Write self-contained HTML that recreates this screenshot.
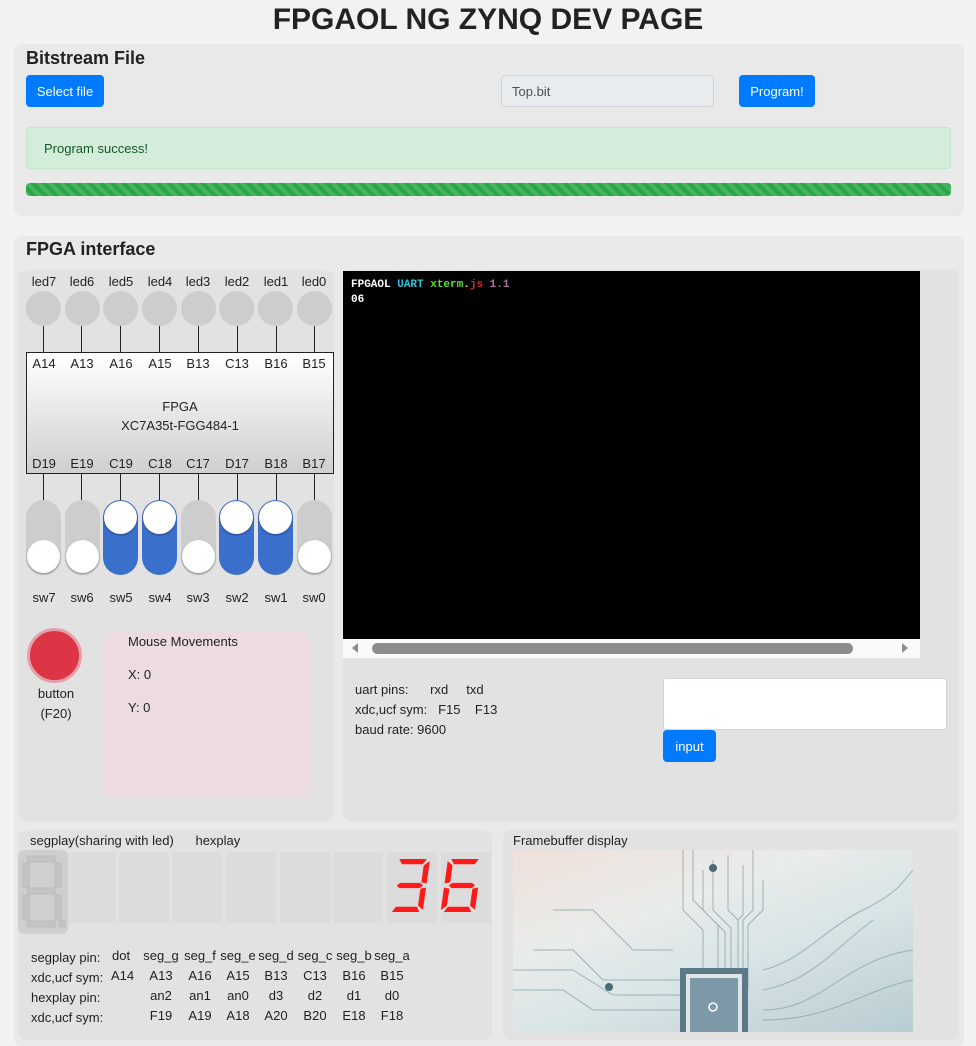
<!DOCTYPE html>
<html><head><meta charset="utf-8"><style>
*{box-sizing:border-box;margin:0;padding:0}
body{width:976px;height:1032px;overflow:hidden;background:#f2f2f2;font-family:"Liberation Sans",sans-serif;color:#222;font-size:13px;position:relative}
.a{position:absolute}
.card{position:absolute;background:#e9e9e9;border-radius:8px}
.btn{position:absolute;background:#007bff;color:#fff;border-radius:4px;font-size:13px;display:flex;align-items:center;justify-content:center}
.c{text-align:center;width:40px;margin-left:-20px}
.led{position:absolute;width:35px;height:35px;border-radius:50%;background:#cdcdcd;top:291px}
.vl{position:absolute;width:1px;background:#222}
.sw{position:absolute;width:35px;height:75px;border-radius:18px;top:500px;background:#cdcdcd}
.sw.on{background:#3a6fcc}
.k{position:absolute;left:1px;width:33px;height:33px;border-radius:50%;background:#fff;box-shadow:0 1px 2px rgba(0,0,0,.35)}
.sb{position:absolute;top:852px;height:71px;width:50px;background:#dcdcdc}
</style></head><body>
<div class="a" style="left:0;width:976px;top:3px;text-align:center;font-size:30px;font-weight:bold;color:#222">FPGAOL NG ZYNQ DEV PAGE</div>

<div class="card" style="left:14px;top:44px;width:950px;height:172px"></div>
<div class="a" style="left:26px;top:48px;font-size:18px;font-weight:bold">Bitstream File</div>
<div class="btn" style="left:26px;top:75px;width:78px;height:32px">Select file</div>
<div class="a" style="left:501px;top:75px;width:213px;height:32px;background:#e9ecef;border:1px solid #ced4da;border-radius:4px;padding:8px 10px;color:#495057">Top.bit</div>
<div class="btn" style="left:739px;top:75px;width:76px;height:32px">Program!</div>
<div class="a" style="left:26px;top:127px;width:925px;height:42px;background:#d4edda;border:1px solid #c3e6cb;border-radius:4px;padding:13px 17px;color:#155724">Program success!</div>
<div class="a" style="left:26px;top:183px;width:925px;height:13px;border-radius:4px;background:#28a745 repeating-linear-gradient(45deg,rgba(255,255,255,.15) 0 4px,transparent 4px 8px)"></div>

<div class="card" style="left:14px;top:236px;width:950px;height:810px"></div>
<div class="a" style="left:26px;top:239px;font-size:18px;font-weight:bold">FPGA interface</div>

<div class="a" style="left:18px;top:270px;width:316px;height:551px;background:#e2e2e2;border-radius:8px"></div>
<div class="a" style="left:343px;top:270px;width:616px;height:551px;background:#e2e2e2;border-radius:8px"></div>

<div class="a c" style="left:44px;top:274px">led7</div><div class="a c" style="left:82px;top:274px">led6</div><div class="a c" style="left:121px;top:274px">led5</div><div class="a c" style="left:160px;top:274px">led4</div><div class="a c" style="left:198px;top:274px">led3</div><div class="a c" style="left:237px;top:274px">led2</div><div class="a c" style="left:276px;top:274px">led1</div><div class="a c" style="left:314px;top:274px">led0</div>
<div class="led" style="left:26px"></div><div class="led" style="left:65px"></div><div class="led" style="left:103px"></div><div class="led" style="left:142px"></div><div class="led" style="left:181px"></div><div class="led" style="left:219px"></div><div class="led" style="left:258px"></div><div class="led" style="left:297px"></div>
<div class="vl" style="left:43px;top:326px;height:26px"></div><div class="vl" style="left:81px;top:326px;height:26px"></div><div class="vl" style="left:120px;top:326px;height:26px"></div><div class="vl" style="left:159px;top:326px;height:26px"></div><div class="vl" style="left:198px;top:326px;height:26px"></div><div class="vl" style="left:237px;top:326px;height:26px"></div><div class="vl" style="left:276px;top:326px;height:26px"></div><div class="vl" style="left:314px;top:326px;height:26px"></div>
<div class="a" style="left:26px;top:352px;width:308px;height:122px;border:1px solid #222;background:linear-gradient(#fff,#cfcfcf)"></div>
<div class="a c" style="left:44px;top:356px">A14</div><div class="a c" style="left:82px;top:356px">A13</div><div class="a c" style="left:121px;top:356px">A16</div><div class="a c" style="left:160px;top:356px">A15</div><div class="a c" style="left:198px;top:356px">B13</div><div class="a c" style="left:237px;top:356px">C13</div><div class="a c" style="left:276px;top:356px">B16</div><div class="a c" style="left:314px;top:356px">B15</div>
<div class="a" style="left:26px;width:308px;top:397px;text-align:center;line-height:19px">FPGA<br>XC7A35t-FGG484-1</div>
<div class="a c" style="left:44px;top:456px">D19</div><div class="a c" style="left:82px;top:456px">E19</div><div class="a c" style="left:121px;top:456px">C19</div><div class="a c" style="left:160px;top:456px">C18</div><div class="a c" style="left:198px;top:456px">C17</div><div class="a c" style="left:237px;top:456px">D17</div><div class="a c" style="left:276px;top:456px">B18</div><div class="a c" style="left:314px;top:456px">B17</div>
<div class="vl" style="left:43px;top:474px;height:26px"></div><div class="vl" style="left:81px;top:474px;height:26px"></div><div class="vl" style="left:120px;top:474px;height:26px"></div><div class="vl" style="left:159px;top:474px;height:26px"></div><div class="vl" style="left:198px;top:474px;height:26px"></div><div class="vl" style="left:237px;top:474px;height:26px"></div><div class="vl" style="left:276px;top:474px;height:26px"></div><div class="vl" style="left:314px;top:474px;height:26px"></div>
<div class="sw" style="left:26px"><div class="k" style="top:40px"></div></div>
<div class="sw" style="left:65px"><div class="k" style="top:40px"></div></div>
<div class="sw on" style="left:103px"><div class="k" style="top:1px"></div></div>
<div class="sw on" style="left:142px"><div class="k" style="top:1px"></div></div>
<div class="sw" style="left:181px"><div class="k" style="top:40px"></div></div>
<div class="sw on" style="left:219px"><div class="k" style="top:1px"></div></div>
<div class="sw on" style="left:258px"><div class="k" style="top:1px"></div></div>
<div class="sw" style="left:297px"><div class="k" style="top:40px"></div></div>
<div class="a c" style="left:44px;top:590px">sw7</div><div class="a c" style="left:82px;top:590px">sw6</div><div class="a c" style="left:121px;top:590px">sw5</div><div class="a c" style="left:160px;top:590px">sw4</div><div class="a c" style="left:198px;top:590px">sw3</div><div class="a c" style="left:237px;top:590px">sw2</div><div class="a c" style="left:276px;top:590px">sw1</div><div class="a c" style="left:314px;top:590px">sw0</div>

<div class="a" style="left:27px;top:628px;width:55px;height:55px;border-radius:50%;background:#dc3545;border:3px solid #e8a0a8"></div>
<div class="a" style="left:26px;width:60px;top:684px;text-align:center;line-height:20px">button<br>(F20)</div>
<div class="a" style="left:103px;top:631px;width:206px;height:166px;background:#ecdce2;border-radius:8px"></div>
<div class="a" style="left:128px;top:634px">Mouse Movements</div>
<div class="a" style="left:128px;top:667px">X: 0</div>
<div class="a" style="left:128px;top:700px">Y: 0</div>

<div class="a" style="left:343px;top:271px;width:577px;height:368px;background:#000;font-family:'Liberation Mono',monospace;font-size:11px;font-weight:bold;padding:7px 8px;line-height:15px;color:#fff"><span>FPGAOL</span> <span style="color:#2fc4e0">UART</span> <span style="color:#5ce034">xterm</span><span style="color:#f0e020">.</span><span style="color:#e02020">js</span> <span style="color:#b070a0">1.1</span><br>06</div>
<div class="a" style="left:343px;top:639px;width:577px;height:19px;background:#fafafa"></div>
<div class="a" style="left:372px;top:643px;width:481px;height:11px;border-radius:6px;background:#8c8c8c"></div>
<div class="a" style="left:352px;top:643px;width:0;height:0;border-top:5px solid transparent;border-bottom:5px solid transparent;border-right:6px solid #8c8c8c"></div>
<div class="a" style="left:902px;top:643px;width:0;height:0;border-top:5px solid transparent;border-bottom:5px solid transparent;border-left:6px solid #8c8c8c"></div>
<div class="a" style="left:355px;top:680px;line-height:20px">uart pins:&nbsp;&nbsp;&nbsp;&nbsp;&nbsp;&nbsp;rxd&nbsp;&nbsp;&nbsp;&nbsp;&nbsp;txd<br>xdc,ucf sym:&nbsp;&nbsp;&nbsp;F15&nbsp;&nbsp;&nbsp;&nbsp;F13<br>baud rate: 9600</div>
<div class="a" style="left:663px;top:678px;width:284px;height:52px;background:#fff;border:1px solid #ced4da;border-radius:3px"></div>
<div class="btn" style="left:663px;top:730px;width:53px;height:32px">input</div>

<div class="a" style="left:18px;top:830px;width:474px;height:210px;background:#e2e2e2;border-radius:8px"></div>
<div class="a" style="left:30px;top:833px">segplay(sharing with led)&nbsp;&nbsp;&nbsp;&nbsp;&nbsp;&nbsp;hexplay</div>
<div class="sb" style="left:66px"></div><div class="sb" style="left:119px"></div><div class="sb" style="left:172px"></div><div class="sb" style="left:226px"></div><div class="sb" style="left:280px"></div><div class="sb" style="left:333px"></div><div class="sb" style="left:387px"></div><div class="sb" style="left:441px"></div>
<div class="a" style="left:18px;top:850px;width:50px;height:84px;background:#cfcfcf;border-radius:6px"></div>
<svg class="a" style="left:18px;top:850px" width="50" height="84"><g fill="#c4c4c4" stroke="#bbb" stroke-width="1"><rect x="9" y="6" width="28" height="6"/><rect x="5" y="13" width="6" height="24"/><rect x="37" y="13" width="6" height="24"/><rect x="9" y="38" width="28" height="6"/><rect x="5" y="45" width="6" height="25"/><rect x="37" y="45" width="6" height="25"/><rect x="9" y="71" width="28" height="6"/><rect x="41" y="71" width="6" height="6"/></g></svg>
<svg class="a" style="left:387px;top:852px" width="108" height="71"><g fill="#ff1a1a">
<g transform="translate(9,7) skewX(-8) scale(1.1,1.06)"><polygon points="3,0 28,0 25,5 6,5"/><polygon points="26,6 31,2 31,23 26,22"/><polygon points="26,28 31,27 31,48 26,44"/><polygon points="6,45 25,45 28,50 3,50"/><polygon points="4,25 7,22.5 25,22.5 28,25 25,27.5 7,27.5"/></g>
<g transform="translate(61,7) skewX(-8) scale(1.1,1.06)"><polygon points="3,0 28,0 25,5 6,5"/><polygon points="0,2 5,6 5,22 0,23"/><polygon points="0,27 5,28 5,44 0,48"/><polygon points="26,28 31,27 31,48 26,44"/><polygon points="6,45 25,45 28,50 3,50"/><polygon points="4,25 7,22.5 25,22.5 28,25 25,27.5 7,27.5"/></g>
</g></svg>
<div class="a" style="left:31px;top:948px;line-height:20px;white-space:pre">segplay pin:
xdc,ucf sym:
hexplay pin:
xdc,ucf sym:</div>
<div class="a" style="left:112px;top:948px">dot</div><div class="a" style="left:111px;top:968px">A14</div>
<div class="a c" style="left:161px;top:948px">seg_g</div><div class="a c" style="left:161px;top:968px">A13</div><div class="a c" style="left:161px;top:988px">an2</div><div class="a c" style="left:161px;top:1008px">F19</div>
<div class="a c" style="left:200px;top:948px">seg_f</div><div class="a c" style="left:200px;top:968px">A16</div><div class="a c" style="left:200px;top:988px">an1</div><div class="a c" style="left:200px;top:1008px">A19</div>
<div class="a c" style="left:238px;top:948px">seg_e</div><div class="a c" style="left:238px;top:968px">A15</div><div class="a c" style="left:238px;top:988px">an0</div><div class="a c" style="left:238px;top:1008px">A18</div>
<div class="a c" style="left:276px;top:948px">seg_d</div><div class="a c" style="left:276px;top:968px">B13</div><div class="a c" style="left:276px;top:988px">d3</div><div class="a c" style="left:276px;top:1008px">A20</div>
<div class="a c" style="left:315px;top:948px">seg_c</div><div class="a c" style="left:315px;top:968px">C13</div><div class="a c" style="left:315px;top:988px">d2</div><div class="a c" style="left:315px;top:1008px">B20</div>
<div class="a c" style="left:354px;top:948px">seg_b</div><div class="a c" style="left:354px;top:968px">B16</div><div class="a c" style="left:354px;top:988px">d1</div><div class="a c" style="left:354px;top:1008px">E18</div>
<div class="a c" style="left:392px;top:948px">seg_a</div><div class="a c" style="left:392px;top:968px">B15</div><div class="a c" style="left:392px;top:988px">d0</div><div class="a c" style="left:392px;top:1008px">F18</div>

<div class="a" style="left:503px;top:830px;width:456px;height:210px;background:#e2e2e2;border-radius:8px"></div>
<div class="a" style="left:513px;top:833px">Framebuffer display</div>
<div class="a" style="left:513px;top:850px;width:400px;height:182px;overflow:hidden;background:linear-gradient(160deg,#f0e0da 0%,#e8ecea 35%,#d8e4e6 60%,#b8ccd2 100%)">
<svg width="400" height="182"><g stroke="#8aa4ac" stroke-width="1" fill="none" opacity=".8">
<path d="M170 0v60l20 20v60M180 0v50l25 25v65M190 20v40l22 22v58M200 10v50l18 18v60M215 5v55l10 10v70M230 15v50l-5 5v70M240 0v60l-10 10v60M250 30v30l-15 15v65"/>
<path d="M0 120h60l40 25h80M0 140h50l30 20h90M20 100h40l30 30h80M40 60l40 0 40 40h40"/>
<path d="M250 120c40-10 60-40 100-60s40-30 50-40M250 140c50-10 70-40 110-70M250 160c60 0 80-50 150-60M400 130c-50 10-80 40-150 40"/>
</g><g fill="#4a6a78"><circle cx="200" cy="18" r="4"/><circle cx="96" cy="137" r="4"/></g>
<rect x="167" y="118" width="68" height="70" fill="#5a7a88"/><rect x="173" y="124" width="56" height="58" fill="#e0e6e6"/><rect x="177" y="128" width="48" height="54" fill="#7d98a6"/><circle cx="200" cy="157" r="4" fill="none" stroke="#fff" stroke-width="1.5"/>
</svg></div>
</body></html>
